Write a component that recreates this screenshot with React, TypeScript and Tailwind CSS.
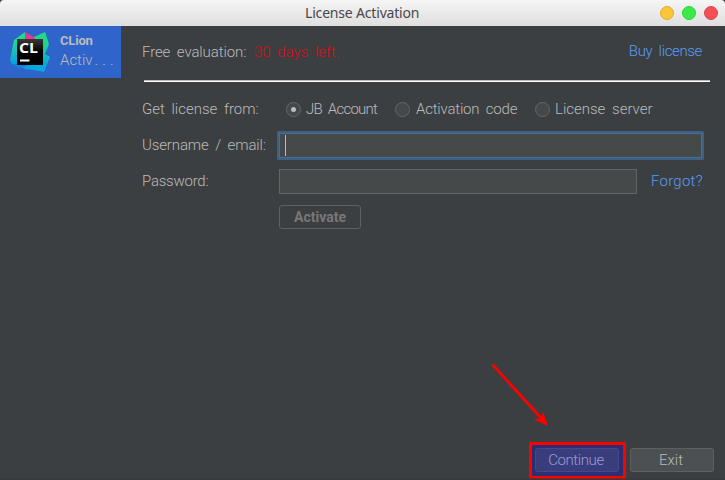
import type { ReactNode } from "react";

const thin = "font-['Roboto','Noto_Sans',sans-serif] font-light whitespace-pre";

function Text({ children, className }: { children: ReactNode; className: string }) {
  return <span className={`${thin} block text-[15px] leading-[18px] ${className}`}>{children}</span>;
}

function Radio({ checked = false }: { checked?: boolean }) {
  return (
    <span className="flex size-[15px] shrink-0 items-center justify-center rounded-full border border-[#646667] bg-[#43494a]">
      {checked && <span className="size-[5px] rounded-full bg-[#bbbbbb]" />}
    </span>
  );
}

function ClionLogo() {
  return (
    <svg className="block size-10 shrink-0" viewBox="0 0 40 40">
      <defs>
        <linearGradient id="left" x1="0" y1="0" x2="0" y2="1">
          <stop offset="0.25" stopColor="#22d88f" />
          <stop offset="0.85" stopColor="#0a9ee8" />
        </linearGradient>
        <linearGradient id="right" x1="0.6" y1="0" x2="0.4" y2="1">
          <stop offset="0.2" stopColor="#21d789" />
          <stop offset="0.75" stopColor="#07a6df" />
        </linearGradient>
        <linearGradient id="tile" x1="0" y1="0" x2="0" y2="1">
          <stop offset="0" stopColor="#3a3a3a" />
          <stop offset="0.5" stopColor="#000" />
        </linearGradient>
      </defs>
      <path d="M15 0 4 8 0 28 2 32 18 38 22 14Z" fill="url(#left)" />
      <path d="M24 5 35 0 39 12 35 22 40 25 34 40 18 37 12 20Z" fill="url(#right)" />
      <path d="M15 0 25 6V20H15Z" fill="#ed358c" />
      <path d="M2 32 9 37 20 32Z" fill="#1481d8" />
      <rect x="7" y="7" width="26" height="26" fill="url(#tile)" />
      <text x="9" y="21" fill="#fff" fontFamily="Open Sans, sans-serif" fontSize="14.500" fontWeight="700" textLength="19" lengthAdjust="spacingAndGlyphs">CL</text>
      <rect x="10" y="27.500" width="9.500" height="2" fill="#fff" />
    </svg>
  );
}

export default function App() {
  return (
    <div className="relative h-[480px] w-[725px] overflow-hidden bg-[#3c3f41] text-[#bbbbbb]">
      <header className="flex h-[26px] items-center rounded-t-[4px] bg-linear-to-b from-[#f5f5f5] to-[#dfdfdf] pr-[7px]">
        <div className="w-[660px] pl-[305px] font-['Noto_Sans',sans-serif] text-[14px] leading-[26px] tracking-[-0.18px] text-[#4d4648]">
          License Activation
        </div>
        <div className="flex gap-2">
          <span className="size-3.5 rounded-full border border-[#e5ac31] bg-[#fac536]" />
          <span className="size-3.5 rounded-full border border-[#2ed33c] bg-[#39ea49]" />
          <span className="size-3.5 rounded-full border border-[#dc4551] bg-[#f25056]" />
        </div>
      </header>

      <div className="flex h-[454px]">
        <aside className="w-[121px] shrink-0">
          <div className="flex h-[52px] items-start bg-[#2f65ca] pt-1.5 pl-2.5">
            <ClionLogo />
            <div className="pl-2.5">
              <div className="font-['Roboto',sans-serif] text-[13px] leading-[18px] font-bold tracking-[-0.2px]">CLion</div>
              <Text className="mt-px">Activ<span className="pl-0.5 tracking-[4.200px]">...</span></Text>
            </div>
          </div>
        </aside>

        <main className="flex w-[604px] flex-col pl-[21px]">
          <div className="flex h-[54px] w-[560px] items-start justify-between">
            <div className="flex pt-[17px]">
              <Text className="w-28 tracking-[-0.100px] [word-spacing:3px]">Free evaluation:</Text>
              <Text className="text-[#d80e18] [word-spacing:3px]">30 days left.</Text>
            </div>
            <Text className="pt-4 text-[#589df6] tracking-[-0.350px] [word-spacing:3px]">Buy license</Text>
          </div>
          <div className="ml-0.5 h-0.5 w-[566px] border-t border-[#bbbbbb] bg-white" />

          <div className="mt-5 flex h-[15px] items-center">
            <Text className="w-36 pb-0.5 [word-spacing:3px]">Get license from:</Text>
            <Radio checked />
            <Text className="w-[94px] pb-0.5 pl-[5px] tracking-[-0.750px] [word-spacing:3px]">JB Account</Text>
            <Radio />
            <Text className="w-[125px] pb-0.5 pl-1.5 tracking-[-0.200px] [word-spacing:3px]">Activation code</Text>
            <Radio />
            <Text className="pb-0.5 pl-[5px] [word-spacing:3px]">License server</Text>
          </div>

          <div className="mt-3.5 flex h-[29px] items-center">
            <Text className="w-[135px] shrink-0 pb-0.5 tracking-[-0.120px] [word-spacing:3px]">Username / email:</Text>
            <div className="h-[29px] w-[427px] rounded-[1px] border-2 border-[#3d6185] bg-[#45494a]">
              <div className="h-full border border-[#466d94] pt-px pl-[5px]">
                <div className="h-[21px] w-px bg-[#bbbbbb]" />
              </div>
            </div>
          </div>

          <div className="mt-[9px] flex h-[25px] items-center">
            <Text className="w-[137px] pb-0.5 tracking-[-0.250px]">Password:</Text>
            <div className="h-[25px] w-[358px] border border-[#646464] bg-[#45494a]" />
            <Text className="pb-0.5 pl-3.5 text-[#589df6] tracking-[0.250px]">Forgot?</Text>
          </div>

          <button className="mt-[11px] ml-[137px] h-6 w-[82px] rounded-[3px] border border-[#5e6060] font-['Roboto',sans-serif] text-[14px] leading-[22px] font-bold text-[#777777]">
            Activate
          </button>

          <footer className="mt-auto ml-[387px] flex h-[38px] items-start gap-1">
            <div className="h-[37px] w-[97px] border-[3px] border-[#ff0000] bg-[#2b2f72] p-[3px]">
              <button className="flex h-6 w-[84px] items-center justify-center rounded-[3px] border border-[#45488a] bg-[#3a3d7c] text-[#9a9bd2]">
                <Text className="pr-0.5 tracking-[-0.400px]">Continue</Text>
              </button>
            </div>
            <button className="mt-1.5 flex h-6 w-[84px] items-center justify-center rounded-[3px] border border-[#5e6060] bg-[#4c5052]">
              <Text className="pr-0.5">Exit</Text>
            </button>
          </footer>
        </main>
      </div>

      <svg className="absolute top-[360px] left-[485px]" width="70" height="70" viewBox="0 0 70 70">
        <path d="M7.500 4.500 57 59" fill="none" stroke="#ff0000" strokeWidth="2.800" />
        <path d="m63 66-14-6.500 7-1.500 2-6.500Z" fill="#ff0000" />
      </svg>
      <div className="absolute inset-x-0 bottom-0 h-0.5 bg-[#35373b]/60" />
    </div>
  );
}
